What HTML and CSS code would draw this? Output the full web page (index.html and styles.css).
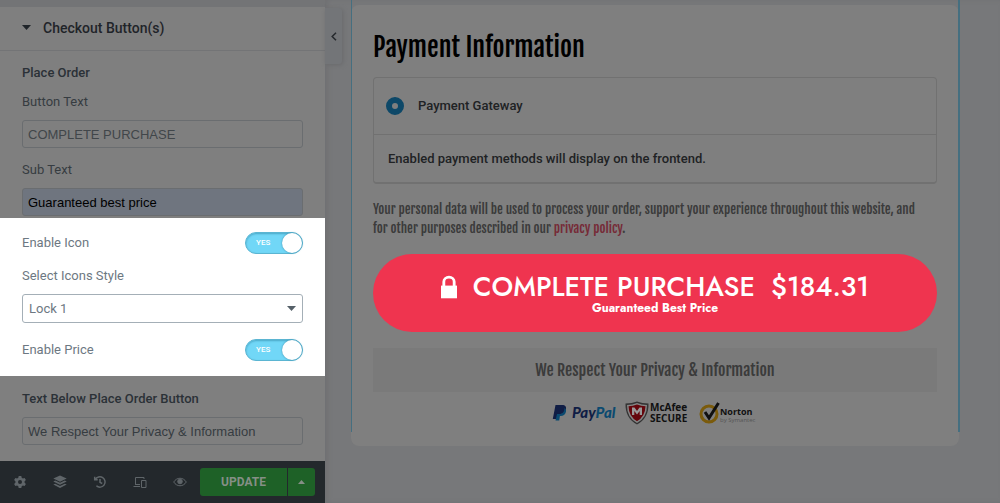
FILE: index.html
```
<!DOCTYPE html>
<html lang="en">
    <head>
        <meta charset="UTF-8">
        <title>Checkout Button(s)</title>
        <meta name="viewport" content="width=device-width, initial-scale=1">
        <link rel="stylesheet" href="styles.css">
    </head>
    <body>
        <div class="editor">
            <aside class="panel">
                <h2 class="section-title">
                    <svg width="9" height="5" viewBox="0 0 9 5"><path d="M0 0h9L4.500 5z"/></svg>
                    Checkout Button(s)
                </h2>
                <div class="controls">
                    <h3 class="group-title">Place Order</h3>
                    <label for="button-text">Button Text</label>
                    <input class="field" id="button-text" type="text" placeholder="COMPLETE PURCHASE">
                    <label for="sub-text">Sub Text</label>
                    <input class="field filled" id="sub-text" type="text" value="Guaranteed best price">
                </div>
                <div class="controls highlight">
                    <div class="row">
                        <label for="enable-icon">Enable Icon</label>
                        <span class="switch"><input id="enable-icon" type="checkbox" checked><span>YES</span></span>
                    </div>
                    <label for="icon-style">Select Icons Style</label>
                    <div class="select">
                        <select id="icon-style"><option>Lock 1</option><option>Lock 2</option></select>
                        <svg width="9" height="5" viewBox="0 0 9 5"><path d="M0 0h9L4.500 5z"/></svg>
                    </div>
                    <div class="row">
                        <label for="enable-price">Enable Price</label>
                        <span class="switch"><input id="enable-price" type="checkbox" checked><span>YES</span></span>
                    </div>
                </div>
                <div class="controls below">
                    <label class="group-title" for="below-text">Text Below Place Order Button</label>
                    <input class="field" id="below-text" type="text" value="We Respect Your Privacy &amp; Information">
                </div>
                <footer class="toolbar">
                    <button class="tool" type="button" aria-label="Settings">
                        <svg width="14" height="14" viewBox="0 0 14 14"><path fill-rule="evenodd" d="M5.700 1h2.600l.4 1.700 1.200.7 1.700-.5 1.300 2.200L11.600 6.300v1.400l1.300 1.200-1.300 2.200-1.700-.5-1.200.7-.4 1.700H5.700l-.4-1.700-1.200-.7-1.700.5-1.300-2.200 1.300-1.200V6.300L1.100 5.100l1.300-2.200 1.700.5 1.200-.7zM7 5a2 2 0 1 0 0 4 2 2 0 0 0 0-4z"/></svg>
                    </button>
                    <button class="tool" type="button" aria-label="Navigator">
                        <svg width="14" height="14" viewBox="0 0 14 14"><path d="M7 .5l6.700 3.100L7 6.700.3 3.600z"/><path d="M.3 6.500l1.900-.9L7 7.800l4.800-2.200 1.900.9L7 9.700zM.3 9.600l1.900-.9L7 10.900l4.800-2.200 1.900.9L7 12.900z"/></svg>
                    </button>
                    <button class="tool" type="button" aria-label="History">
                        <svg class="line medium" width="14" height="14" viewBox="0 0 14 14"><path d="M2.300 4.500A5.200 5.200 0 1 1 3.400 10.800M1.700 1.800v3h3M7 4v3.300l2.200 1.200"/></svg>
                    </button>
                    <button class="tool" type="button" aria-label="Responsive mode">
                        <svg class="line thin" width="14" height="14" viewBox="0 0 14 14"><path d="M2.500 10V2.500h8.500V4M.5 11.500h6.500M2.500 9.500h4.500M8.500 5.500h4.500v7H8.500z"/></svg>
                    </button>
                    <button class="tool" type="button" aria-label="Preview">
                        <svg class="line thin" width="14" height="14" viewBox="0 0 14 14"><path d="M.7 7C3.800 2 10.200 2 13.300 7 10.200 12 3.800 12 .7 7z"/><circle cx="7" cy="6.500" r="2.300" class="solid"/></svg>
                    </button>
                    <button class="update" type="button">UPDATE</button>
                    <button class="update-more" type="button" aria-label="Save options">
                        <svg width="7" height="4" viewBox="0 0 7 4"><path d="M0 4h7L3.500 0z"/></svg>
                    </button>
                </footer>
            </aside>

            <main class="preview">
                <button class="collapse" type="button" aria-label="Hide panel">
                    <svg width="6" height="9" viewBox="0 0 6 9"><path d="M5 .8L1.200 4.500 5 8.200"/></svg>
                </button>
                <section class="card">
                    <h1>Payment Information</h1>
                    <div class="gateway">
                        <label class="gateway-option"><input type="radio" name="gateway" checked>Payment Gateway</label>
                        <p class="gateway-note">Enabled payment methods will display on the frontend.</p>
                    </div>
                    <p class="privacy">Your personal data will be used to process your order, support your experience throughout this website, and for other purposes described in our <a href="#">privacy policy</a>.</p>
                    <button class="purchase" type="button">
                        <span class="purchase-main">
                            <svg width="16" height="24" viewBox="0 0 17 24"><path d="M0 10.500h17V24H0z"/><path class="shackle" d="M3 11V6.500a5.500 5 0 0 1 11 0V11"/></svg>
                            <span>COMPLETE PURCHASE</span>
                            <span>$184.31</span>
                        </span>
                        <span class="purchase-sub">Guaranteed Best Price</span>
                    </button>
                    <p class="respect">We Respect Your Privacy &amp; Information</p>
                    <div class="badges">
                        <svg width="66" height="26" viewBox="0 0 66 26" role="img" aria-label="PayPal">
                            <path fill="#101d45" d="M3.500 5h6.500c3.500 0 4.600 2 3.900 4.700-.7 3-2.700 4.300-5.600 4.300H6.200L5.300 19H.8z"/>
                            <path fill="#0b4a70" d="M12.500 8c1.500.8 1.800 2.400 1.400 4.100-.7 2.700-2.600 3.900-5.200 3.900H7.900L7.200 20.500H3.500L5 14h2.400c3 0 5-2 5.100-6z"/>
                            <text class="paypal" x="20" y="18">Pay<tspan>Pal</tspan></text>
                        </svg>
                        <svg width="67" height="26" viewBox="0 0 67 26" role="img" aria-label="McAfee Secure">
                            <path fill="#343434" d="M.5 3.500Q7 3.500 12 1.500q5 2 11.500 2Q24 18 12 24.500 0 18 .5 3.500z"/>
                            <path fill="#858585" d="M2 5q5.500-.2 10-2 4.500 1.800 10 2 .2 12.500-10 18Q1.800 17.500 2 5z"/>
                            <path fill="#65060c" d="M3.500 6.300Q8 6 12 4.500q4 1.500 8.500 1.800-.3 10.200-8.500 15-8.200-4.800-8.500-15z"/>
                            <path fill="#999" d="M7 15V7.500h2.500L12 11l2.500-3.500H17V15h-2.300v-4L12 14.500 9.300 11v4z"/>
                            <text class="mcafee" x="25" y="11">McAfee</text>
                            <text class="secure" x="25" y="22">SECURE</text>
                        </svg>
                        <svg width="60" height="26" viewBox="0 0 60 26" role="img" aria-label="Norton by Symantec">
                            <circle cx="10" cy="14" r="8" fill="none" stroke="#7b5b0b" stroke-width="3"/>
                            <path d="M6 12l4 6L19.500 3" fill="none" stroke="#101010" stroke-width="3"/>
                            <text class="norton" x="21" y="15">Norton</text>
                            <text class="symantec" x="21" y="22">by Symantec</text>
                        </svg>
                    </div>
                </section>
            </main>
        </div>
    </body>
</html>
```

FILE: styles.css
```
*{box-sizing: border-box;}
body,h1,h2,h3,p{margin: 0;}
body{
    font-family: Roboto,"Liberation Sans",sans-serif;
    font-size: 13px;
    line-height: 20px;
    color: #363c41;
    background: #77787a;
}
button,input,select{font: inherit;color: inherit;margin: 0;}
button{border: none;padding: 0;cursor: pointer;}
svg{display: block;fill: currentColor;}

.editor{
    display: grid;
    grid-template-columns: 325px 1fr;
    min-height: 100vh;
}

/* left panel */
.panel{
    display: flex;
    flex-direction: column;
    background: #7f7f7f;
    border-top: 7px solid #737476;
}
.section-title{
    display: flex;
    align-items: center;
    gap: 12px;
    height: 44px;
    padding: 0 22px 2px;
    border-bottom: 1px solid #737476;
    font-size: 14px;
    font-weight: 500;
    color: #1f2429;
}
.controls{
    display: flex;
    flex-direction: column;
    padding: 12px 22px 2px;
}
.group-title{
    margin-bottom: 9px;
    font-size: 13px;
    font-weight: 500;
    color: #2b3137;
}
.field{
    width: 100%;
    height: 28px;
    margin: 8px 0 12px;
    padding: 0 5px;
    border: 1px solid #6a6d70;
    border-radius: 3px;
    background: transparent;
    font-family: "Liberation Sans",Arial,sans-serif;
    font-size: 13px;
}
.field::placeholder{color: #41464a;opacity: 1;}
.filled{
    margin-bottom: 0;
    background: #6f757f;
    color: #000;
}
.highlight{
    padding: 14px 22px 15px;
    background: #fff;
    color: #6d7882;
}
.row{
    display: flex;
    align-items: center;
    justify-content: space-between;
}
.highlight .row:first-child{margin-bottom: 12px;}
.switch{display: grid;align-items: center;}
.switch input,.switch span{grid-area: 1 / 1;}
.switch input{
    display: flex;
    justify-content: flex-end;
    appearance: none;
    width: 58px;
    height: 22px;
    border: 1px solid #5bb5d2;
    border-radius: 11px;
    background: #71d7f7;
    box-shadow: inset 0 1px 2px #4aa7c7;
}
.switch input::after{
    content: "";
    width: 20px;
    height: 20px;
    border-radius: 50%;
    background: #fff;
    box-shadow: 0 0 2px #3788a5;
}
.switch span{
    padding-left: 11px;
    font-size: 8px;
    font-weight: 500;
    color: #fff;
    pointer-events: none;
}
.select{
    display: grid;
    align-items: center;
    margin: 8px 0 16px;
}
.select select,.select svg{grid-area: 1 / 1;}
.select select{
    appearance: none;
    width: 100%;
    height: 29px;
    padding: 0 6px;
    border: 1px solid #a4afb7;
    border-radius: 3px;
    background: #fff;
}
.select svg{
    justify-self: end;
    margin-right: 7px;
    color: #556068;
    pointer-events: none;
}
.below{flex: 1;padding-top: 13px;}
.below .group-title{margin: 0;}

.toolbar{
    display: flex;
    align-items: center;
    height: 42px;
    background: #23282c;
    color: #5f6569;
}
.tool{
    display: grid;
    place-items: center;
    width: 40px;
    height: 42px;
    background: none;
}
.line{fill: none;stroke: currentColor;}
.medium{stroke-width: 1.5;}
.thin{stroke-width: 1;}
.solid{fill: currentColor;}
.update{
    width: 87px;
    height: 28px;
    border-radius: 3px 0 0 3px;
    background: #1e6127;
    font-size: 12px;
    font-weight: 700;
    color: #858f86;
}
.update-more{
    display: grid;
    place-items: center;
    width: 27px;
    height: 28px;
    margin-left: 1px;
    border-radius: 0 3px 3px 0;
    background: #1e6127;
    color: #858f86;
}

/* page preview */
.preview{
    position: relative;
    padding: 5px 41px 57px 26px;
    box-shadow: inset 3px 0 4px #707173;
}
.collapse{
    position: absolute;
    top: 8px;
    left: 0;
    display: grid;
    place-items: center;
    width: 17px;
    height: 56px;
    border-radius: 0 3px 3px 0;
    background: #737578;
    box-shadow: 1px 1px 4px #696a6c;
}
.collapse svg{fill: none;stroke: #25292d;stroke-width: 1.5;}
.card{
    padding: 22px 22px 20px;
    border-radius: 8px;
    background: #7f7f7f;
}
/* selected column outline */
.card::before{
    content: "";
    position: absolute;
    inset: 0 40px 71px 26px;
    border: solid #456f80;
    border-width: 0 2px 0 1px;
    pointer-events: none;
}
h1,.privacy,.respect{
    font-family: "Fjalla One","Liberation Sans Narrow","Roboto Condensed",sans-serif;
    font-weight: 400;
}
h1{
    margin-bottom: 10px;
    font-size: 26px;
    line-height: 40px;
    color: #000;
}
.gateway{
    border: 1px solid #717171;
    border-bottom-width: 2px;
    border-radius: 4px;
    font-weight: 500;
    color: #202224;
}
.gateway-option{
    display: flex;
    align-items: center;
    gap: 14px;
    height: 56px;
    padding: 0 12px;
}
.gateway-option input{
    appearance: none;
    width: 18px;
    height: 18px;
    border: 6px solid #0d4868;
    border-radius: 50%;
}
.gateway-note{
    padding: 14px 14px 13px;
    border-top: 1px solid #717171;
}
.privacy{
    margin: 16px 0;
    padding-right: 12px;
    font-size: 13px;
    line-height: 19px;
    color: #3b3b3b;
}
.privacy a{color: #762b37;text-decoration: none;}
.purchase{
    display: flex;
    flex-direction: column;
    align-items: center;
    width: 100%;
    padding: 18px 20px;
    border-radius: 39px;
    background: #ef344f;
    font-family: Jost,Lato,sans-serif;
    color: #fff;
}
.purchase-main{
    display: flex;
    align-items: center;
    gap: 16px;
    font-size: 27px;
    line-height: 30px;
    font-weight: 500;
}
.purchase .shackle{fill: none;stroke: #fff;stroke-width: 3;}
.purchase-sub{
    font-size: 12px;
    line-height: 12px;
    font-weight: 700;
}
.respect{
    margin: 16px 0 8px;
    padding: 12px;
    background: #7a7a7a;
    font-size: 16px;
    text-align: center;
    color: #3b3b3b;
}
.badges{
    display: flex;
    justify-content: center;
    gap: 7px;
}
.badges text{fill: #101010;font-family: "Open Sans",sans-serif;font-weight: 700;}
.badges .paypal{font-family: Lato,sans-serif;font-size: 15px;font-style: italic;font-weight: 900;fill: #101d45;}
.paypal tspan{fill: #0b4a70;}
.badges .mcafee{font-size: 10px;}
.badges .secure{font-size: 10px;}
.badges .norton{font-size: 9px;}
.badges .symantec{font-size: 6px;font-weight: 400;fill: #555;}
```
